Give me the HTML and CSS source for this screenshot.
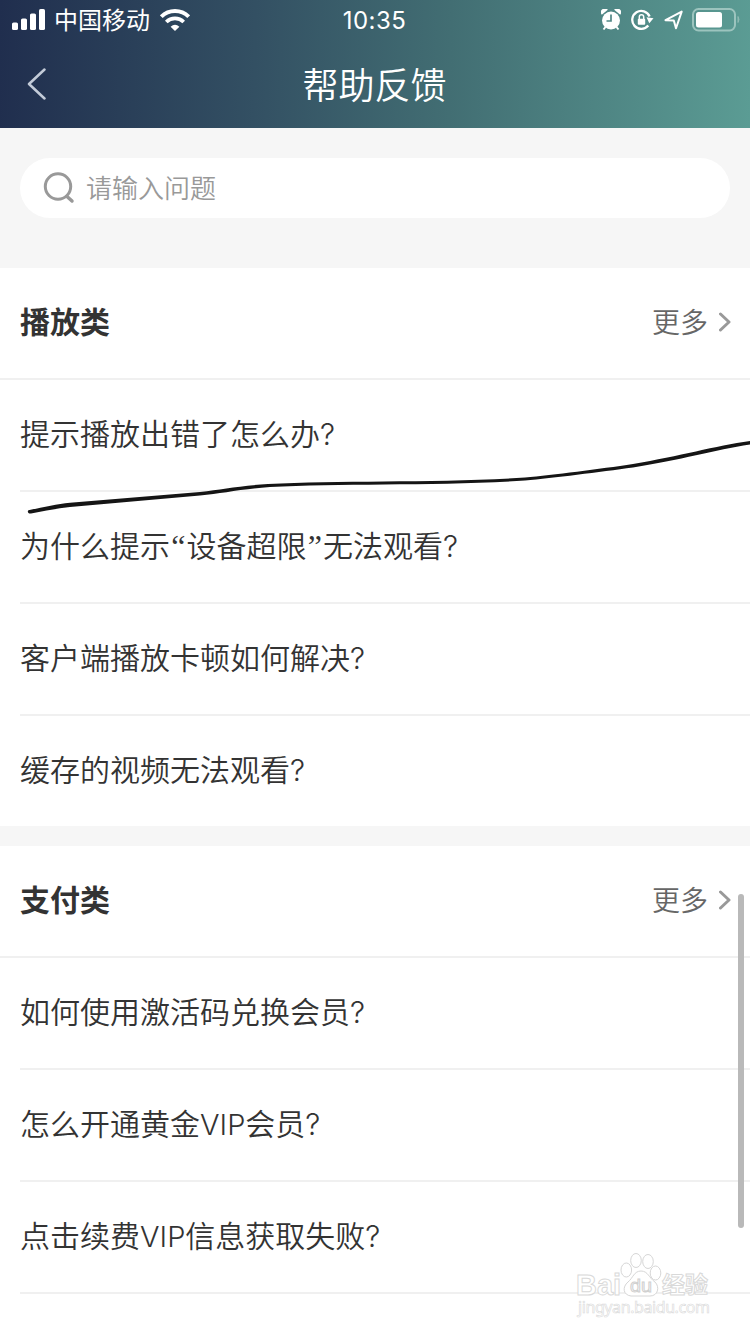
FILE: index.html
```html
<!DOCTYPE html>
<html lang="zh-CN">
<head>
<meta charset="utf-8">
<title>帮助反馈</title>
<link rel="stylesheet" href="styles.css">
</head>
<body>
<div class="screen">
  <header class="top">
    <div class="status">
      <div class="status-left">
        <svg class="signal" width="34" height="22" viewBox="0 0 34 22" fill="#fff"><rect x="0" y="13.5" width="6" height="7.5" rx="1.6"/><rect x="9" y="9.5" width="6" height="11.5" rx="1.6"/><rect x="18" y="4.500" width="6" height="16.500" rx="1.6"/><rect x="27" y="0" width="6" height="21" rx="1.6"/></svg>
        <span class="carrier">中国移动</span>
        <svg class="wifi" width="30" height="22" viewBox="0 0 30 22"><g fill="none" stroke="#fff"><path d="M1.300 7.700A19.500 19.500 0 0 1 28.700 7.700" stroke-width="4"/><path d="M6.300 13A12.300 12.300 0 0 1 23.700 13" stroke-width="3.700"/></g><path d="M15 22L10.600 17.700Q15 13.800 19.400 17.700Z" fill="#fff"/></svg>
      </div>
      <span class="time">10:35</span>
      <div class="status-right">
        <svg width="20" height="22" viewBox="0 0 20 22"><g fill="#fff"><circle cx="10" cy="11.500" r="9"/><path d="M.8 5.800A3.900 3.900 0 0 1 6.800 .8Z"/><path d="M19.200 5.800A3.900 3.900 0 0 0 13.200 .8Z"/></g><path d="M4.500 18L2.500 20.500M15.500 18L17.500 20.500" stroke="#fff" stroke-width="2"/><path d="M10 5.500V12H5.500" fill="none" stroke="#508685" stroke-width="1.700"/></svg>
        <svg width="23" height="22" viewBox="0 0 23 22"><path d="M17.300 16.500A9 9 0 1 1 18.600 7.500" fill="none" stroke="#fff" stroke-width="2.300"/><path d="M15.500 8.300L22.500 9.300L18.300 14.200Z" fill="#fff"/><rect x="6.800" y="9.800" width="7.400" height="6" rx="1" fill="#fff"/><path d="M8.300 10.500V8a2.200 2.200 0 0 1 4.400 0v2.500" fill="none" stroke="#fff" stroke-width="1.500"/></svg>
        <svg class="nav-arrow" width="20" height="20" viewBox="0 0 20 20"><path d="M1.500 10.200L17.700 1.600L12 18.200L9.800 10.500Z" fill="none" stroke="#fff" stroke-width="2" stroke-linejoin="round"/></svg>
        <svg class="battery" width="48" height="24" viewBox="0 0 48 24"><rect x="1" y="1" width="42" height="21.500" rx="5.500" fill="none" stroke="#9cc4be" stroke-width="2"/><rect x="4" y="4" width="26" height="15.500" rx="2.500" fill="#fff"/><path d="M46 8.500Q48 11.500 46 14.500Z" stroke="#8fbbb4" fill="#8fbbb4"/></svg>
      </div>
    </div>
    <div class="titlebar">
      <svg class="back" width="20" height="32" viewBox="0 0 20 32"><path d="M17.500 1.500L2 16L17.500 30.500" fill="none" stroke="#c3cbd8" stroke-width="2.500" stroke-linecap="round" stroke-linejoin="round"/></svg>
      <h1 class="title">帮助反馈</h1>
    </div>
  </header>

  <div class="search-area">
    <div class="search">
      <svg width="32" height="32" viewBox="0 0 32 32" fill="none" stroke="#999"><circle cx="15" cy="14.500" r="12.700" stroke-width="3"/><path d="M24 24.500L29 29" stroke-width="3.500" stroke-linecap="round"/></svg>
      <span class="placeholder">请输入问题</span>
    </div>
  </div>

  <section class="group">
    <div class="group-head"><h2 class="group-name">播放类</h2><span class="more">更多</span><svg class="chevron" width="12" height="20" viewBox="0 0 12 20"><path d="M1.500 2L10 10L1.500 18" fill="none" stroke="#999" stroke-width="3" stroke-linecap="round" stroke-linejoin="round"/></svg></div>
    <div class="list">
      <div class="item">提示播放出错了怎么办<span class="q">?</span></div>
      <div class="item">为什么提示<span class="quote">“</span>设备超限<span class="quote">”</span>无法观看<span class="q">?</span></div>
      <div class="item">客户端播放卡顿如何解决<span class="q">?</span></div>
      <div class="item">缓存的视频无法观看<span class="q">?</span></div>
    </div>
  </section>

  <section class="group second">
    <div class="group-head"><h2 class="group-name">支付类</h2><span class="more">更多</span><svg class="chevron" width="12" height="20" viewBox="0 0 12 20"><path d="M1.500 2L10 10L1.500 18" fill="none" stroke="#999" stroke-width="3" stroke-linecap="round" stroke-linejoin="round"/></svg></div>
    <div class="list">
      <div class="item">如何使用激活码兑换会员<span class="q">?</span></div>
      <div class="item">怎么开通黄金<span class="latin">VIP</span>会员<span class="q">?</span></div>
      <div class="item">点击续费<span class="latin">VIP</span>信息获取失败<span class="q">?</span></div>
      <div class="item faded">会员购买成功未生效<span class="q">?</span></div>
    </div>
  </section>

  <svg class="stroke" width="750" height="100" viewBox="0 430 750 100"><path d="M28.500 510.200C44 507 57 504 70 502.700L200 492C222 489.500 237 486 268 484C340 480 440 483 525 477.500C553 475 600 469 633 464C680 456 715 446 750 441L750 444.500C715 450 680 460 633 467.500C600 472 553 478 525 480.500C440 486 340 483 270 487C240 489 222 493.500 200 495.500L70 507C57 508.500 44 511 31 513.500C28 514 27 511 28.500 510.200Z" fill="#151515"/></svg>
  <div class="scrollbar"></div>
  <div class="watermark">
    <svg width="140" height="70" viewBox="0 0 140 70">
      <g class="wm-text">
        <text class="wm-brand" x="0" y="44.500" textLength="45" lengthAdjust="spacingAndGlyphs">Bai</text>
        <text class="wm-cn" x="86" y="43" textLength="46">经验</text>
        <text class="wm-url" x="2" y="62.500" textLength="132">jingyan.baidu.com</text>
      </g>
      <g fill="#fff" stroke="#d6d6d6"><ellipse cx="50.300" cy="20" rx="5.300" ry="7"/><ellipse cx="60" cy="10.500" rx="5.300" ry="7"/><ellipse cx="72" cy="11.500" rx="5.300" ry="7"/><ellipse cx="79.500" cy="23" rx="5.300" ry="7"/><path d="M65 21C72 21 73 28 79 32C84 37 82 46 74 46H55C47 45 46 37 52 32C57 28 58 21 65 21Z"/></g>
      <text class="wm-du" x="54" y="41.500" textLength="22" lengthAdjust="spacingAndGlyphs">du</text>
    </svg>
  </div>
</div>
</body>
</html>
```
FILE: styles.css
```css
* { box-sizing: border-box; }
body { margin: 0; }
.screen {
  position: relative;
  width: 750px;
  height: 1334px;
  overflow: hidden;
  background: #f6f6f6;
  color: #333;
  font-family: "Noto Sans CJK SC", sans-serif;
  font-weight: 350;
}
svg { display: block; flex: none; }
.top {
  height: 128px;
  color: #fff;
  background: linear-gradient(91deg, #202e4e 0%, #335063 34%, #426e73 60%, #5b9c94 100%);
}
.status {
  display: grid;
  grid-template-columns: 1fr auto 1fr;
  height: 40px;
  align-items: center;
}
.status-left { display: flex; align-items: center; padding-left: 12px; }
.carrier { margin-left: 8px; font-size: 24px; line-height: 36px; font-weight: 400; padding-bottom: 2px; }
.wifi { margin-left: 10px; }
.time { font-family: Inter, sans-serif; font-size: 24px; font-weight: 400; letter-spacing: .5px; padding-right: 1px; }
.status-right { display: flex; align-items: center; justify-content: flex-end; padding-right: 10px; }
.status-right svg + svg { margin-left: 10px; }
.status-right .battery { margin-left: 8px; }
.titlebar { display: grid; grid-template-columns: 1fr auto 1fr; align-items: center; height: 88px; }
.back { margin-left: 27px; }
.title { margin: 0; padding: 0 1px 2px 0; font-size: 36px; line-height: 52px; font-weight: 350; }
.search-area { height: 140px; padding: 30px 20px 0; }
.search { display: flex; align-items: center; height: 60px; padding-left: 23px; gap: 11px; border-radius: 30px; background: #fff; }
.placeholder { padding-bottom: 2px; color: #999; font-size: 26px; line-height: 40px; }
.group { background: #fff; }
.second { margin-top: 20px; }
.group-head { display: flex; align-items: center; height: 112px; padding: 0 19px 2px 20px; border-bottom: 2px solid #f0f0f0; }
.group-name { flex: 1; margin: 0; padding-bottom: 4px; font-size: 30px; line-height: 44px; font-weight: 700; }
.more { padding-bottom: 2px; color: #666; font-size: 28px; line-height: 40px; }
.chevron { margin-left: 11px; }
.list { padding-left: 20px; }
.item { height: 112px; border-bottom: 2px solid #f0f0f0; font-size: 30px; line-height: 104px; white-space: nowrap; }
.item:last-child { border-bottom: 0; }
.group:not(.second) .item:last-child { height: 110px; }
.item.faded { padding-top: 1px; color: #bbb; }
.latin, .q { font-family: Inter, "Liberation Sans", sans-serif; font-size: 29px; font-weight: 350; }
.q { font-size: 30px; }
.quote { display: inline-block; width: 16.500px; text-align: center; font-family: "Liberation Serif", serif; font-size: 32px; line-height: 40px; font-weight: 400; }
.stroke { position: absolute; left: 0; top: 430px; }
.scrollbar { position: absolute; left: 738px; top: 894px; width: 6px; height: 334px; border-radius: 3px; background: #b9b9b9; }
.watermark { position: absolute; left: 576px; top: 1250px; }
.wm-text { fill: #fff; stroke: #d9d9d9; stroke-width: 1px; }
.wm-brand { font: 700 30px "Liberation Sans", sans-serif; }
.wm-cn { font: 700 23px "Noto Sans CJK SC", sans-serif; }
.wm-url { font: 400 16px "Noto Sans", sans-serif; stroke-width: .6px; }
.wm-du { font: 400 19px "Liberation Sans", sans-serif; fill: #fff; stroke: #d0d0d0; }
```
